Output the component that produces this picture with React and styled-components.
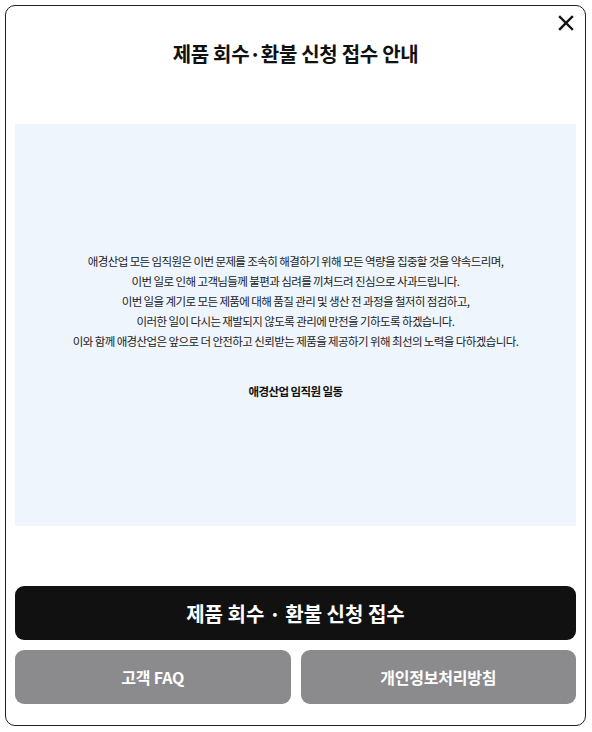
import React from 'react';
import styled, { createGlobalStyle } from 'styled-components';

const GlobalStyle = createGlobalStyle`
  html, body {
    margin: 0;
    padding: 0;
    background: #fff;
  }
  body {
    font-family: "Noto Sans CJK KR", "Noto Sans", sans-serif;
  }
`;

const Page = styled.div`
  padding: 5px 6px 6px 5px;
`;

const Modal = styled.section`
  position: relative;
  box-sizing: border-box;
  width: 581px;
  height: 721px;
  border: 1px solid #1e1e1e;
  border-radius: 10px;
  padding: 34px 9px 20px 9px;
  display: flex;
  flex-direction: column;
  background: #fff;
`;

const CloseButton = styled.button`
  position: absolute;
  top: 5px;
  right: 7px;
  width: 24px;
  height: 24px;
  padding: 0;
  border: 0;
  background: transparent;
  display: flex;
  align-items: center;
  justify-content: center;
  cursor: pointer;
`;

const Title = styled.h2`
  margin: 0;
  font-size: 20px;
  line-height: 28px;
  font-weight: 700;
  letter-spacing: -0.3px;
  color: #111;
  text-align: center;
`;

const Notice = styled.div`
  margin-top: 56px;
  height: 402px;
  background: #eef5fd;
  display: flex;
  flex-direction: column;
  align-items: center;
  justify-content: center;
  padding-top: 2px;
  box-sizing: border-box;
`;

const Paragraph = styled.p`
  margin: 0;
  font-size: 11.5px;
  line-height: 20px;
  letter-spacing: -0.6px;
  color: #222;
  text-align: center;
`;

const Signature = styled.p`
  margin: 30px 0 0;
  font-size: 11.5px;
  line-height: 20px;
  font-weight: 700;
  letter-spacing: -0.6px;
  color: #111;
  text-align: center;
`;

const Actions = styled.div`
  margin-top: 60px;
  display: flex;
  flex-direction: column;
  gap: 10px;
`;

const Row = styled.div`
  display: grid;
  grid-template-columns: 1fr 1fr;
  gap: 10px;
`;

const ActionButton = styled.button`
  height: 54px;
  border: 0;
  border-radius: 9px;
  background: ${(p) => (p.$primary ? '#111111' : '#8b8b8d')};
  color: #fff;
  font-family: "Noto Sans CJK KR", "Noto Sans", sans-serif;
  font-weight: 700;
  font-size: ${(p) => (p.$primary ? '20px' : '16px')};
  letter-spacing: ${(p) => (p.$primary ? '0' : '-0.2px')};
  cursor: pointer;
  display: flex;
  align-items: center;
  justify-content: center;
`;

const lines = [
  '애경산업 모든 임직원은 이번 문제를 조속히 해결하기 위해 모든 역량을 집중할 것을 약속드리며,',
  '이번 일로 인해 고객님들께 불편과 심려를 끼쳐드려 진심으로 사과드립니다.',
  '이번 일을 계기로 모든 제품에 대해 품질 관리 및 생산 전 과정을 철저히 점검하고,',
  '이러한 일이 다시는 재발되지 않도록 관리에 만전을 기하도록 하겠습니다.',
  '이와 함께 애경산업은 앞으로 더 안전하고 신뢰받는 제품을 제공하기 위해 최선의 노력을 다하겠습니다.',
];

export default function App() {
  return (
    <>
      <GlobalStyle />
      <Page>
        <Modal>
          <CloseButton aria-label="닫기">
            <svg width="16" height="16" viewBox="0 0 16 16">
              <path d="M2 2 L14 14 M14 2 L2 14" stroke="#111" strokeWidth="2.4" strokeLinecap="square" />
            </svg>
          </CloseButton>
          <Title>제품 회수·환불 신청 접수 안내</Title>
          <Notice>
            {lines.map((l) => (
              <Paragraph key={l}>{l}</Paragraph>
            ))}
            <Signature>애경산업 임직원 일동</Signature>
          </Notice>
          <Actions>
            <ActionButton $primary>제품 회수 · 환불 신청 접수</ActionButton>
            <Row>
              <ActionButton>고객 FAQ</ActionButton>
              <ActionButton>개인정보처리방침</ActionButton>
            </Row>
          </Actions>
        </Modal>
      </Page>
    </>
  );
}
